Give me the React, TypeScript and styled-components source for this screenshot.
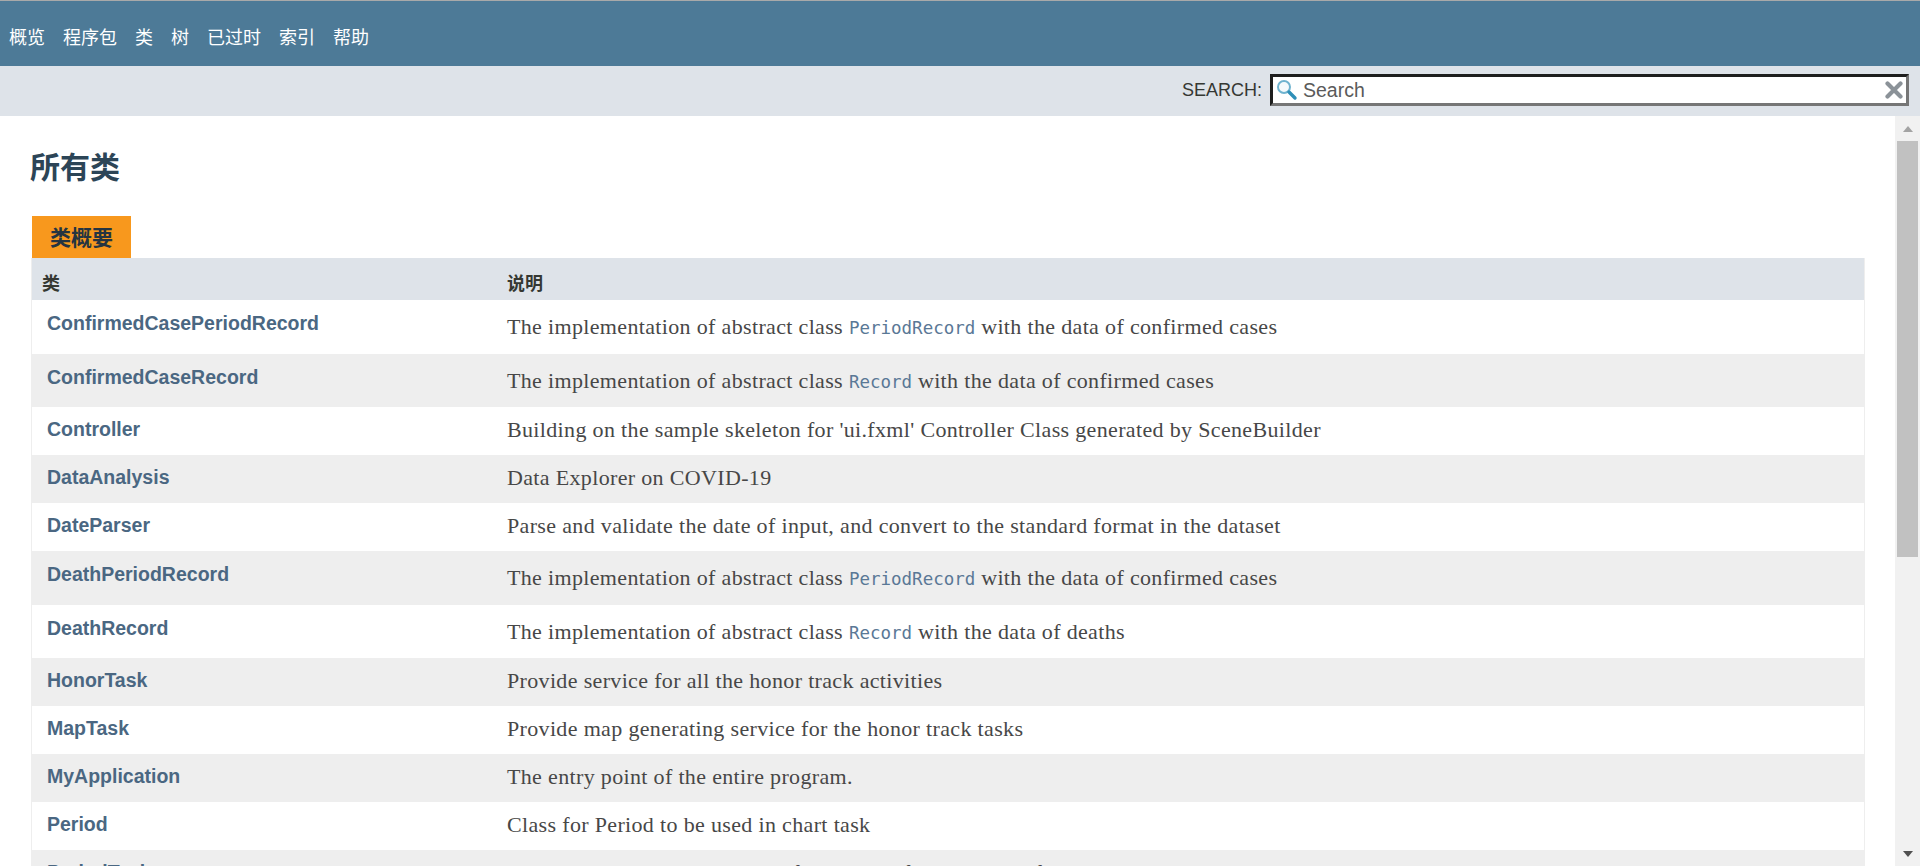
import React from 'react'
import styled, { createGlobalStyle } from 'styled-components'

const CJK = `"Liberation Sans", "Noto Sans CJK SC", sans-serif`

const GlobalStyle = createGlobalStyle`
  html, body {
    margin: 0;
    height: 100%;
    overflow: hidden;
    background: #fff;
  }
`

const Page = styled.div`
  display: flex;
  flex-direction: column;
  height: 866px;
  font-family: ${CJK};
`

const TopNav = styled.nav`
  display: flex;
  align-items: center;
  gap: 18px;
  height: 66px;
  padding: 5px 0 0 9px;
  box-sizing: border-box;
  flex: none;
  background: #4d7a97;
  border-top: 1px solid #a9a9a9;
`

const NavItem = styled.a`
  font-size: 18px;
  color: #fff;
  white-space: nowrap;
`

const SubNav = styled.div`
  display: flex;
  align-items: center;
  justify-content: flex-end;
  box-sizing: border-box;
  flex: none;
  height: 50px;
  padding: 0 11px 2px 0;
  background: #dee3e9;
`

const SearchLabel = styled.label`
  margin-right: 8px;
  font-size: 18px;
  color: #353833;
`

const SearchBox = styled.div`
  display: flex;
  align-items: center;
  box-sizing: border-box;
  width: 639px;
  height: 32px;
  padding: 0 3px 0 3px;
  background: #fff;
  border-style: solid;
  border-width: 3px;
  border-color: #1e1e1e #767676 #767676 #1e1e1e;
`

const SearchText = styled.span`
  flex: 1;
  margin-left: 5px;
  font-size: 19.5px;
  color: #5a5a5a;
`

const Body = styled.div`
  display: flex;
  flex: 1;
  min-height: 0;
`

const Content = styled.main`
  flex: 1;
  min-width: 0;
  overflow: hidden;
  padding: 0 30px;
`

const Title = styled.h1`
  margin: 30px 0 0;
  height: 70px;
  font-size: 30px;
  line-height: 44px;
  font-weight: 700;
  color: #2c4557;
`

const Tab = styled.div`
  display: flex;
  align-items: center;
  justify-content: center;
  box-sizing: border-box;
  width: 99px;
  height: 42px;
  margin-left: 2px;
  padding-bottom: 2px;
  font-size: 21px;
  font-weight: 700;
  color: #253441;
  background: #f8981d;
`

const Table = styled.div`
  border-left: 1px solid #eee;
  border-right: 1px solid #eee;
  margin-left: 1px;
`

const Row = styled.div<{ $alt?: boolean; $height: number }>`
  display: grid;
  grid-template-columns: 465px 1fr;
  height: ${({ $height }) => $height}px;
  background: ${({ $alt }) => ($alt ? '#eeeeee' : '#fff')};
`

const HeadRow = styled.div`
  display: grid;
  grid-template-columns: 465px 1fr;
  height: 42px;
  background: #dee3e9;
`

const HeadCell = styled.div`
  padding: 11px 0 0 10px;
  font-size: 18px;
  line-height: 30px;
  font-weight: 700;
  color: #353833;
`

const NameCell = styled.div<{ $top: number }>`
  padding: ${({ $top }) => $top}px 0 0 15px;
`

const ClassLink = styled.a`
  font-size: 19.5px;
  line-height: 24px;
  font-weight: 700;
  color: #4a6782;
`

const DescCell = styled.div<{ $top: number }>`
  padding: ${({ $top }) => $top}px 0 0 10px;
  font-family: "Liberation Serif", serif;
  font-size: 22px;
  letter-spacing: 0.34px;
  line-height: 24px;
  color: #474747;
  white-space: nowrap;
`

const CodeLink = styled.code`
  font-family: "DejaVu Sans Mono", monospace;
  font-size: 17.5px;
  letter-spacing: 0;
  color: #5a7896;
`

const Scrollbar = styled.div`
  display: flex;
  flex-direction: column;
  align-items: center;
  flex: none;
  width: 25px;
  background: #f1f1f1;
`

const ArrowSlot = styled.div`
  display: flex;
  align-items: center;
  justify-content: center;
  flex: none;
  height: 25px;
`

const ArrowUp = styled.div`
  width: 0;
  height: 0;
  border-left: 5px solid transparent;
  border-right: 5px solid transparent;
  border-bottom: 6px solid #a3a3a3;
`

const ArrowDown = styled.div`
  width: 0;
  height: 0;
  border-left: 5px solid transparent;
  border-right: 5px solid transparent;
  border-top: 6px solid #505050;
`

const Track = styled.div`
  flex: 1;
  align-self: stretch;
  padding: 0 2px;
`

const Thumb = styled.div`
  height: 416px;
  background: #c1c1c1;
`

function SearchIcon() {
  return (
    <svg width="22" height="24" viewBox="0 0 22 24" fill="none">
      <circle cx="8" cy="9" r="6" stroke="#6fb3cf" strokeWidth="2" fill="#f4fafc" />
      <path d="M13 14 L19 20" stroke="#2f8fb8" strokeWidth="3.4" strokeLinecap="round" />
    </svg>
  )
}

function ClearIcon() {
  return (
    <svg width="18" height="18" viewBox="0 0 18 18" fill="none">
      <path d="M2.5 2.5 L15.5 15.5 M15.5 2.5 L2.5 15.5" stroke="#8b9298" strokeWidth="4.2" strokeLinecap="round" />
    </svg>
  )
}

type ClassRow = { name: string; before: string; code?: string; after?: string }

const navItems = ['概览', '程序包', '类', '树', '已过时', '索引', '帮助']

const classes: ClassRow[] = [
  { name: 'ConfirmedCasePeriodRecord', before: 'The implementation of abstract class ', code: 'PeriodRecord', after: ' with the data of confirmed cases' },
  { name: 'ConfirmedCaseRecord', before: 'The implementation of abstract class ', code: 'Record', after: ' with the data of confirmed cases' },
  { name: 'Controller', before: "Building on the sample skeleton for 'ui.fxml' Controller Class generated by SceneBuilder" },
  { name: 'DataAnalysis', before: 'Data Explorer on COVID-19' },
  { name: 'DateParser', before: 'Parse and validate the date of input, and convert to the standard format in the dataset' },
  { name: 'DeathPeriodRecord', before: 'The implementation of abstract class ', code: 'PeriodRecord', after: ' with the data of confirmed cases' },
  { name: 'DeathRecord', before: 'The implementation of abstract class ', code: 'Record', after: ' with the data of deaths' },
  { name: 'HonorTask', before: 'Provide service for all the honor track activities' },
  { name: 'MapTask', before: 'Provide map generating service for the honor track tasks' },
  { name: 'MyApplication', before: 'The entry point of the entire program.' },
  { name: 'Period', before: 'Class for Period to be used in chart task' },
  { name: 'PeriodTask', before: 'Service to validate the period of input, and find the data of the records' },
]

function rowHeight(code?: string) {
  if (!code) return 48
  return code === 'Record' ? 53 : 54
}

export default function App() {
  return (
    <Page>
      <GlobalStyle />
      <TopNav>
        {navItems.map((item) => (
          <NavItem key={item}>{item}</NavItem>
        ))}
      </TopNav>
      <SubNav>
        <SearchLabel>SEARCH:</SearchLabel>
        <SearchBox>
          <SearchIcon />
          <SearchText>Search</SearchText>
          <ClearIcon />
        </SearchBox>
      </SubNav>
      <Body>
        <Content>
          <Title>所有类</Title>
          <Tab>类概要</Tab>
          <Table>
            <HeadRow>
              <HeadCell>类</HeadCell>
              <HeadCell>说明</HeadCell>
            </HeadRow>
            {classes.map((row, i) => {
              const tall = !!row.code
              return (
                <Row key={row.name} $alt={i % 2 === 1} $height={rowHeight(row.code)}>
                  <NameCell $top={tall ? 11 : 10}>
                    <ClassLink>{row.name}</ClassLink>
                  </NameCell>
                  <DescCell $top={tall ? 15 : 11}>
                    {row.before}
                    {row.code && <CodeLink>{row.code}</CodeLink>}
                    {row.after}
                  </DescCell>
                </Row>
              )
            })}
          </Table>
        </Content>
        <Scrollbar>
          <ArrowSlot>
            <ArrowUp />
          </ArrowSlot>
          <Track>
            <Thumb />
          </Track>
          <ArrowSlot>
            <ArrowDown />
          </ArrowSlot>
        </Scrollbar>
      </Body>
    </Page>
  )
}
